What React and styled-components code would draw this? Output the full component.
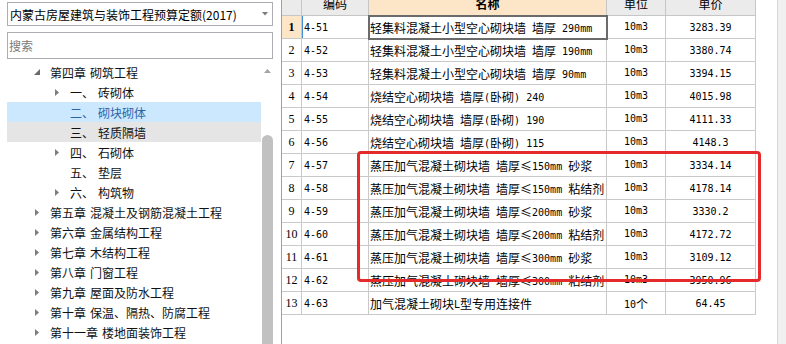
import React from 'react';
import styled, { createGlobalStyle } from 'styled-components';

const GlobalStyle = createGlobalStyle`
  *, *::before, *::after { box-sizing: border-box; }
  html, body { margin: 0; padding: 0; background: #fff; }
  body {
    font-family: "Noto Sans CJK SC", "Noto Sans", sans-serif;
    width: 786px;
    height: 344px;
    overflow: hidden;
  }
`;

const Page = styled.div`
  display: flex;
  width: 786px;
  height: 344px;
  overflow: hidden;
  background: #fff;
`;

/* ---------- left panel ---------- */
const Sidebar = styled.div`
  width: 281px;
  flex-shrink: 0;
  padding: 2px 8px 0 7px;
  display: flex;
  flex-direction: column;
`;

const Select = styled.div`
  height: 24px;
  border: 1px solid #abadb3;
  display: flex;
  align-items: center;
  justify-content: space-between;
  padding: 0 4px 0 2px;
  font-size: 12px;
  color: #000;
  white-space: nowrap;
`;

const Search = styled.div`
  margin-top: 6px;
  height: 27px;
  border: 1px solid #abadb3;
  display: flex;
  align-items: center;
  padding-left: 1px;
  font-size: 12px;
  color: #7a7a7a;
`;

const Tree = styled.div`
  margin-top: 3px;
  flex: 1;
  min-height: 0;
  display: flex;
`;

const TreeList = styled.div`
  flex: 1;
  overflow: hidden;
`;

const TreeRow = styled.div`
  height: 20px;
  display: flex;
  align-items: center;
  padding-left: ${p => 24 + p.$level * 20}px;
  background: ${p => (p.$state === 'selected' ? '#cce8ff' : p.$state === 'hover' ? '#e5e5e5' : 'transparent')};
  color: ${p => (p.$state === 'selected' ? '#2b65a8' : '#111')};
  font-size: 12px;
  white-space: nowrap;
`;

const Toggle = styled.span`
  width: 12px;
  height: 12px;
  display: flex;
  align-items: center;
  justify-content: center;
  flex-shrink: 0;
`;

const NodeNum = styled.span`
  margin-left: 7px;
`;

const NodeText = styled.span`
  margin-left: 4px;
`;

const VScroll = styled.div`
  width: 12px;
  flex-shrink: 0;
  display: flex;
  flex-direction: column;
  align-items: center;
`;

const ScrollArrow = styled.div`
  height: 17px;
  width: 12px;
  display: flex;
  align-items: center;
  justify-content: center;
`;

const Thumb = styled.div`
  margin-top: 56px;
  width: 11px;
  flex: 1;
  background: #c1c1c1;
  border-radius: 6px 6px 0 0;
`;

/* ---------- table ---------- */
const TablePane = styled.div`
  flex: 1;
  display: flex;
  border-left: 1px solid #a0a0a0;
  background: #fff;
`;

const GridWrap = styled.div`
  position: relative;
  width: 479px;
  flex-shrink: 0;
  align-self: flex-start;
`;

const Grid = styled.div`
  display: grid;
  grid-template-columns: 20px 67px 238px 59px 90px;
`;

const HeadCell = styled.div`
  height: 16px;
  border-right: 1px solid #c6c6c6;
  border-bottom: 1px solid #c6c6c6;
  background: ${p => (p.$active ? '#fde6c8' : '#ebebeb')};
  display: flex;
  justify-content: center;
  align-items: flex-start;
  overflow: hidden;
  font-size: 12px;
  font-weight: ${p => (p.$active ? 700 : 400)};
  color: #000;
`;

const HeadText = styled.span`
  line-height: 12px;
  margin-top: -2px;
`;

const Cell = styled.div`
  height: 23px;
  border-right: 1px solid #c9c9c9;
  border-bottom: 1px solid #c9c9c9;
  display: flex;
  align-items: center;
  justify-content: ${p => (p.$align === 'center' ? 'center' : 'flex-start')};
  padding-left: ${p => p.$pad || 0}px;
  background: ${p => p.$bg || '#fff'};
  font-family: "DejaVu Sans Mono", "Liberation Mono", "Noto Sans CJK SC", monospace;
  font-size: 10px;
  color: #000;
  white-space: nowrap;
  overflow: hidden;
  ${p => (p.$current ? 'outline: 2px solid #6b6b6b; outline-offset: -1px; position: relative; z-index: 1;' : '')}
  ${p => (p.$marker ? 'box-shadow: inset 1px 0 0 #3d8fdc;' : '')}
`;

const RowNum = styled(Cell)`
  font-family: "Liberation Serif", serif;
  font-size: 12px;
  font-weight: ${p => (p.$bold ? 700 : 400)};
`;

const Han = styled.span`
  font-family: "Noto Sans CJK SC", sans-serif;
  font-size: 12px;
`;

const Latin = styled.span`
  vertical-align: 1px;
`;

const Wide = styled.span`
  display: inline-block;
  width: 12px;
  text-align: center;
  font-family: "Noto Sans CJK SC", sans-serif;
  font-size: 12px;
`;

const Highlight = styled.div`
  position: absolute;
  left: 75px;
  top: 151px;
  width: 404px;
  height: 131px;
  border: 3px solid #e52a2c;
  border-radius: 4px;
  pointer-events: none;
  z-index: 2;
`;

const Spacer = styled.div`
  flex: 1;
`;

const RightStrip = styled.div`
  width: 9px;
  flex-shrink: 0;
  border-left: 1px solid #d6d6d6;
  background: #f0f0f0;
`;

/* ---------- helpers ---------- */
const Mixed = ({ text }) => {
  const parts = text.split(/([\u3000-\u303f\u3400-\u9fff\uff00-\uffef]+|≤)/).filter(Boolean);
  return (
    <span>
      {parts.map((p, i) => {
        if (p === '≤') return <Wide key={i}>≤</Wide>;
        if (/[\u3000-\u303f\u3400-\u9fff\uff00-\uffef]/.test(p)) return <Han key={i}>{p}</Han>;
        return <Latin key={i}>{p}</Latin>;
      })}
    </span>
  );
};

const Collapsed = () => (
  <svg width="4" height="7" viewBox="0 0 4 7">
    <polygon points="0,0 4,3.5 0,7" fill="#7d7d7d" />
  </svg>
);

const Expanded = () => (
  <svg width="6" height="6" viewBox="0 0 6 6">
    <polygon points="6,0 6,6 0,6" fill="#6a6a6a" />
  </svg>
);

const tree = [
  { level: 0, t: 'open', num: '第四章', text: '砌筑工程' },
  { level: 1, t: 'closed', num: '一、', text: '砖砌体' },
  { level: 1, t: null, num: '二、', text: '砌块砌体', state: 'selected' },
  { level: 1, t: null, num: '三、', text: '轻质隔墙', state: 'hover' },
  { level: 1, t: 'closed', num: '四、', text: '石砌体' },
  { level: 1, t: null, num: '五、', text: '垫层' },
  { level: 1, t: 'closed', num: '六、', text: '构筑物' },
  { level: 0, t: 'closed', num: '第五章', text: '混凝土及钢筋混凝土工程' },
  { level: 0, t: 'closed', num: '第六章', text: '金属结构工程' },
  { level: 0, t: 'closed', num: '第七章', text: '木结构工程' },
  { level: 0, t: 'closed', num: '第八章', text: '门窗工程' },
  { level: 0, t: 'closed', num: '第九章', text: '屋面及防水工程' },
  { level: 0, t: 'closed', num: '第十章', text: '保温、隔热、防腐工程' },
  { level: 0, t: 'closed', num: '第十一章', text: '楼地面装饰工程' },
];

const rows = [
  ['4-51', '轻集料混凝土小型空心砌块墙 墙厚 290mm', '10m3', '3283.39'],
  ['4-52', '轻集料混凝土小型空心砌块墙 墙厚 190mm', '10m3', '3380.74'],
  ['4-53', '轻集料混凝土小型空心砌块墙 墙厚 90mm', '10m3', '3394.15'],
  ['4-54', '烧结空心砌块墙 墙厚(卧砌) 240', '10m3', '4015.98'],
  ['4-55', '烧结空心砌块墙 墙厚(卧砌) 190', '10m3', '4111.33'],
  ['4-56', '烧结空心砌块墙 墙厚(卧砌) 115', '10m3', '4148.3'],
  ['4-57', '蒸压加气混凝土砌块墙 墙厚≤150mm 砂浆', '10m3', '3334.14'],
  ['4-58', '蒸压加气混凝土砌块墙 墙厚≤150mm 粘结剂', '10m3', '4178.14'],
  ['4-59', '蒸压加气混凝土砌块墙 墙厚≤200mm 砂浆', '10m3', '3330.2'],
  ['4-60', '蒸压加气混凝土砌块墙 墙厚≤200mm 粘结剂', '10m3', '4172.72'],
  ['4-61', '蒸压加气混凝土砌块墙 墙厚≤300mm 砂浆', '10m3', '3109.12'],
  ['4-62', '蒸压加气混凝土砌块墙 墙厚≤300mm 粘结剂', '10m3', '3950.96'],
  ['4-63', '加气混凝土砌块L型专用连接件', '10个', '64.45'],
];

export default function App() {
  return (
    <>
      <GlobalStyle />
      <Page>
        <Sidebar>
          <Select>
            <span>内蒙古房屋建筑与装饰工程预算定额(2017)</span>
            <svg width="6" height="4" viewBox="0 0 6 4">
              <polygon points="0,0 6,0 3,3.5" fill="#7a7a7a" />
            </svg>
          </Select>
          <Search>搜索</Search>
          <Tree>
            <TreeList>
              {tree.map((n, i) => (
                <TreeRow key={i} $level={n.level} $state={n.state}>
                  <Toggle>
                    {n.t === 'open' && <Expanded />}
                    {n.t === 'closed' && <Collapsed />}
                  </Toggle>
                  <NodeNum>{n.num}</NodeNum>
                  <NodeText>{n.text}</NodeText>
                </TreeRow>
              ))}
            </TreeList>
            <VScroll>
              <ScrollArrow>
                <svg width="7" height="4" viewBox="0 0 7 4">
                  <polygon points="0,4 3.5,0 7,4" fill="#a3a3a3" />
                </svg>
              </ScrollArrow>
              <Thumb />
            </VScroll>
          </Tree>
        </Sidebar>
        <TablePane>
          <GridWrap>
            <Grid>
              <HeadCell />
              <HeadCell><HeadText>编码</HeadText></HeadCell>
              <HeadCell $active><HeadText>名称</HeadText></HeadCell>
              <HeadCell><HeadText>单位</HeadText></HeadCell>
              <HeadCell><HeadText>单价</HeadText></HeadCell>
              {rows.map((r, i) => (
                <React.Fragment key={r[0]}>
                  <RowNum $align="center" $bg={i === 0 ? '#fde6c8' : undefined} $bold={i === 0}>
                    {i + 1}
                  </RowNum>
                  <Cell $pad={2} $marker={i === 0}>{r[0]}</Cell>
                  <Cell $pad={1} $current={i === 0}><Mixed text={r[1]} /></Cell>
                  <Cell $align="center"><Mixed text={r[2]} /></Cell>
                  <Cell $align="center">{r[3]}</Cell>
                </React.Fragment>
              ))}
            </Grid>
            <Highlight />
          </GridWrap>
          <Spacer />
          <RightStrip />
        </TablePane>
      </Page>
    </>
  );
}
